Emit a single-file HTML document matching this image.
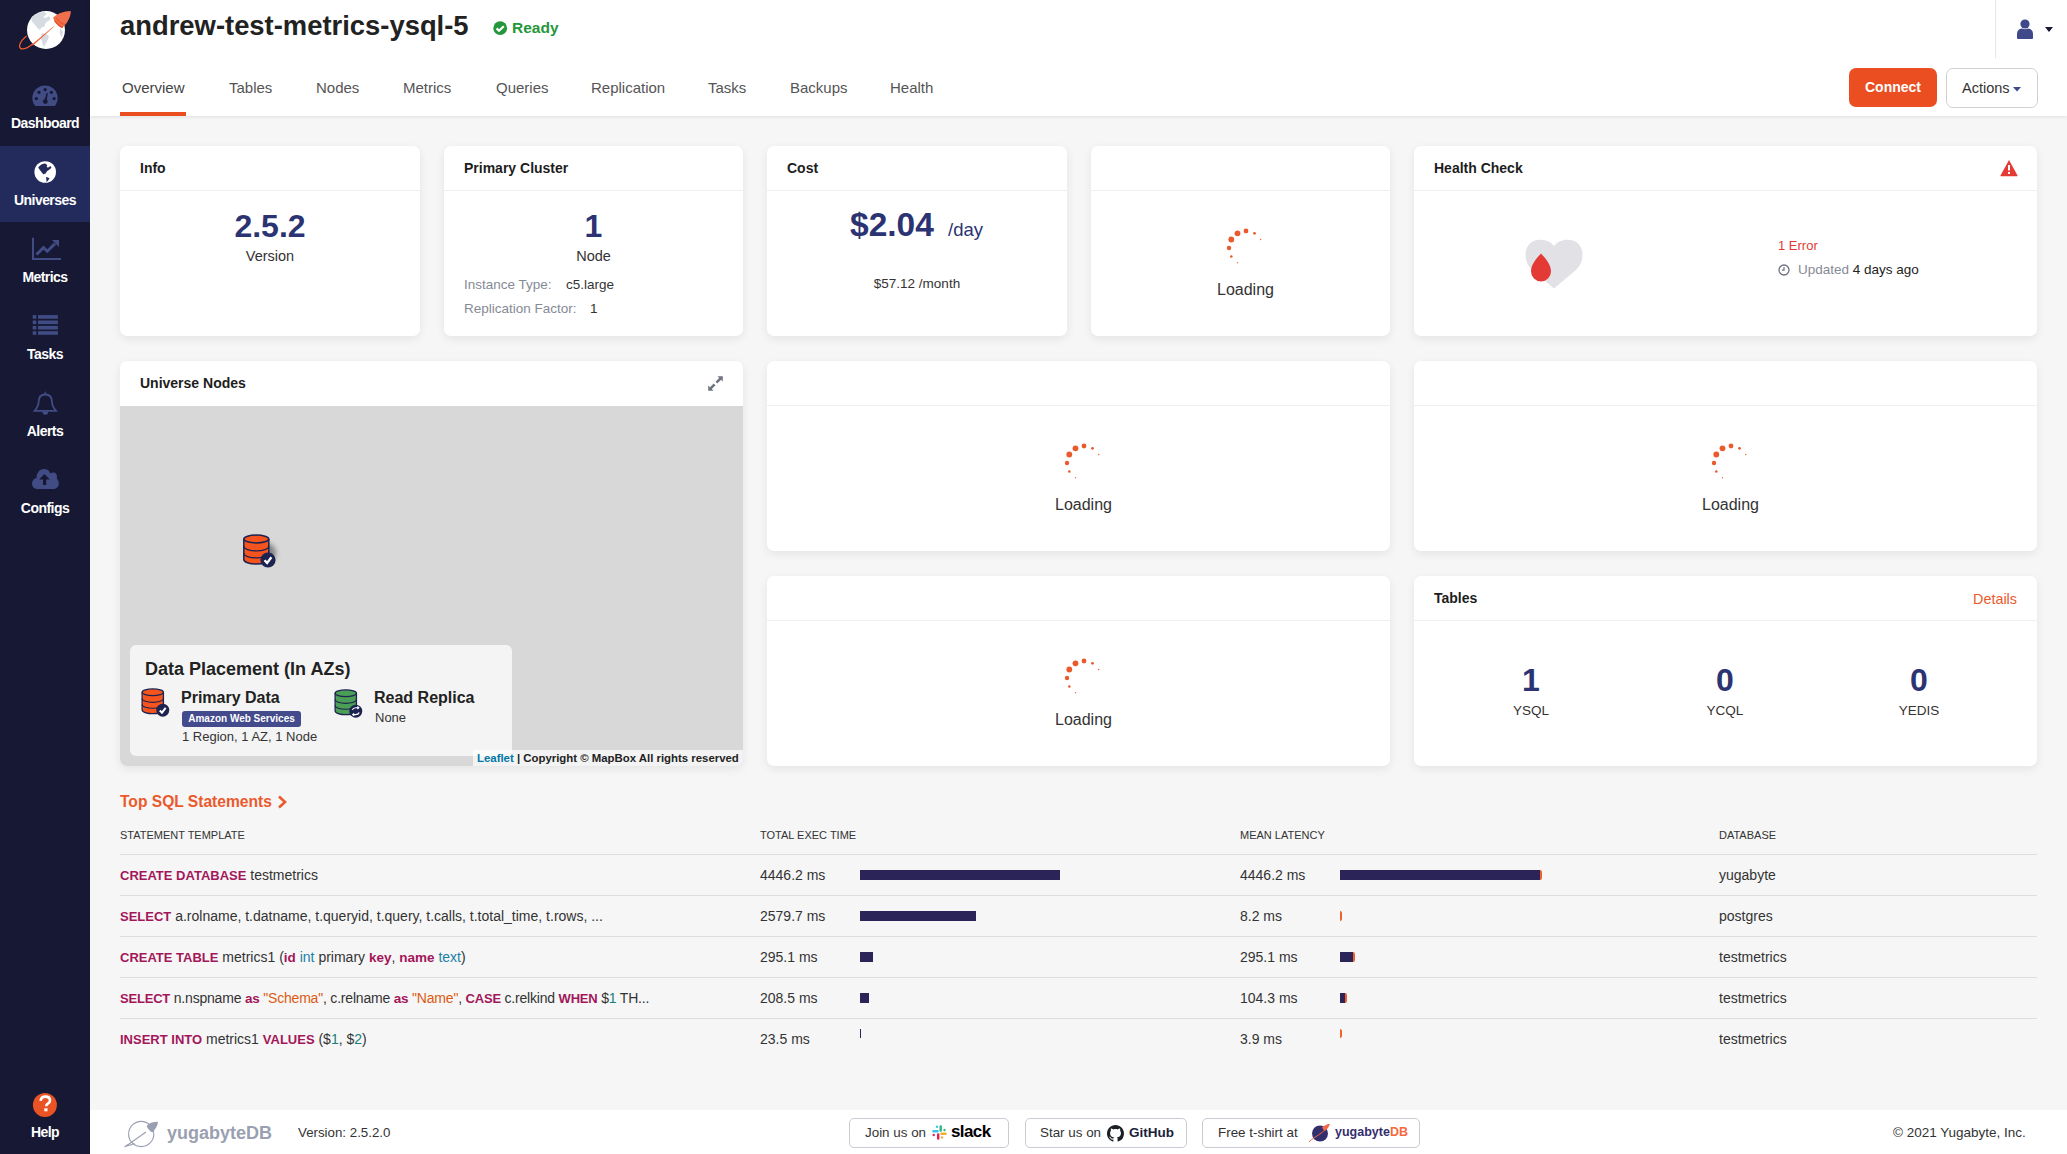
<!DOCTYPE html>
<html><head><meta charset="utf-8">
<style>
*{box-sizing:border-box;margin:0;padding:0}
html,body{width:2067px;height:1154px;overflow:hidden;background:#f6f6f6;font-family:"Liberation Sans",sans-serif;color:#333}
.a{position:absolute;white-space:nowrap}
#side{position:absolute;left:0;top:0;width:90px;height:1154px;background:#161834}
.nav{position:absolute;left:0;width:90px;height:76px;color:#fff;font-weight:bold;font-size:14px;letter-spacing:-0.55px}
.nav.active{background:#232b5c}
.nav .lbl{position:absolute;left:0;width:90px;text-align:center;line-height:16px}
.nav svg{position:absolute}
#hdr{position:absolute;left:90px;top:0;width:1977px;height:116px;background:#fff;box-shadow:0 1px 4px rgba(0,0,0,0.09)}
.title{font-size:27.4px;font-weight:bold;color:#222}
.tab{top:79px;font-size:15px;color:#555;line-height:18px}
.card{position:absolute;background:#fff;border-radius:7px;box-shadow:0 3px 10px rgba(0,0,0,0.075)}
.ch{position:absolute;left:0;top:0;right:0;height:45px;border-bottom:1px solid #efefef}
.ct{position:absolute;left:20px;top:14px;font-size:14px;font-weight:bold;color:#1d1d1d;line-height:17px}
.big{color:#2b3372;font-weight:bold}
.ctr{text-align:center}
.load{position:absolute;left:5px;width:100%;text-align:center;font-size:16px;color:#333;line-height:20px}
.sp{position:absolute;width:40px;height:40px}
.th{position:absolute;font-size:11px;color:#333;line-height:13px;top:829px}
.row{position:absolute;font-size:14px;color:#333;line-height:17px;white-space:nowrap}
.kw{color:#a3175a;font-weight:bold;font-size:13px}
.kl{color:#a3175a;font-weight:bold;font-size:13.5px}
.fn{color:#1a7fa8}
.str{color:#dc5a14}
.num{color:#13807a}
.hl{position:absolute;left:120px;width:1917px;height:1px;background:#dedede}
.bar{position:absolute;height:10px;background:#2b2458}
.tail{position:absolute;height:10px;width:2px;background:#f0622c;border-radius:0 2px 2px 0}
.fbtn{position:absolute;top:1118px;height:30px;border:1px solid #c9cbd2;border-radius:5px;background:#fff;font-size:13.4px;color:#333;line-height:28px}
</style></head>
<body>
<svg width="0" height="0" style="position:absolute">
 <defs>
  <symbol id="spin" viewBox="0 0 40 40">
   <g fill="#ea5a2c">
    <circle cx="20" cy="3" r="2.4"/>
    <circle cx="11.5" cy="5.3" r="2.9"/>
    <circle cx="5.3" cy="11.5" r="2.9"/>
    <circle cx="3" cy="20" r="2.2"/>
    <circle cx="5.3" cy="28.5" r="1.3"/>
    <circle cx="11.5" cy="34.7" r="0.6"/>
    <circle cx="28.5" cy="5.3" r="1.4"/>
    <circle cx="34.7" cy="11.5" r="0.7"/>
   </g>
  </symbol>
  <symbol id="db" viewBox="0 0 34 34">
   <path d="M1.3 5 v20.5 c0 2.6 5.6 4.6 12.5 4.6 s12.5 -2 12.5 -4.6 v-20.5" fill="#f6541f" stroke="#1c2350" stroke-width="1.5"/>
   <ellipse cx="13.8" cy="5" rx="12.5" ry="3.9" fill="#f6541f" stroke="#1c2350" stroke-width="1.5"/>
   <path d="M1.3 12.3 c0 2.6 5.6 4.5 12.5 4.5 s12.5 -1.9 12.5 -4.5 M1.3 19.3 c0 2.6 5.6 4.5 12.5 4.5 s12.5 -1.9 12.5 -4.5" fill="none" stroke="#1c2350" stroke-width="1.3"/>
   <circle cx="25.5" cy="26" r="7.6" fill="#1c2350"/>
   <path d="M22 26.3 l2.6 2.6 l4.3 -5.6" stroke="#fff" stroke-width="2.3" fill="none"/>
  </symbol>
  <symbol id="dbg" viewBox="0 0 34 34">
   <path d="M1.3 5 v20.5 c0 2.6 5.6 4.6 12.5 4.6 s12.5 -2 12.5 -4.6 v-20.5" fill="#4a9e55" stroke="#1c2350" stroke-width="1.5"/>
   <ellipse cx="13.8" cy="5" rx="12.5" ry="3.9" fill="#4a9e55" stroke="#1c2350" stroke-width="1.5"/>
   <path d="M1.3 12.3 c0 2.6 5.6 4.5 12.5 4.5 s12.5 -1.9 12.5 -4.5 M1.3 19.3 c0 2.6 5.6 4.5 12.5 4.5 s12.5 -1.9 12.5 -4.5" fill="none" stroke="#1c2350" stroke-width="1.3"/>
   <circle cx="25.5" cy="26" r="7.6" fill="#1c2350"/>
   <path d="M21.5 24.5 q1 -2.5 4 -2.5 h3 M27.5 20.5 l1.5 1.5 l-1.5 1.5 M29.5 27.5 q-1 2.5 -4 2.5 h-3 M23.5 28.5 l-1.5 1.5 l1.5 1.5" stroke="#fff" stroke-width="1.4" fill="none"/>
  </symbol>
 </defs>
</svg>
<div id="side">
  <div class="nav active" style="top:146px"></div>
  <svg class="a" style="left:0;top:0" width="90" height="1154" viewBox="0 0 90 1154">
    <!-- logo -->
    <circle cx="46" cy="30" r="19" fill="#fff"/>
    <path d="M33 16 q5 -4 11 -4 q3 1 2 3 q-3 1 -2 3 q3 0 5 -2 q2 2 1 4 q-3 1 -4 3 q-2 1 -1 3 q-4 1 -5 4 q-3 -2 -5 -5 q-3 -3 -4 -6 q0 -2 2 -3z M42 33 q5 1 7 3 q-1 4 -3 7 q-1 2 -2 4 q-2 -3 -2 -6 q-2 -3 0 -8z M60 28 q3 2 3 5 q-1 3 -2 4 q-2 -4 -1 -9z" fill="#d5dbe0"/>
    <path d="M26.6 35.9 C 21 40, 18 46, 20.5 48.4 C 23 50, 28.5 47.2, 32.4 44.2" stroke="#ef5b2e" stroke-width="1.3" fill="none"/><path d="M31.5 44.8 L 53.7 26.2 L 53.9 26.8 L 33 45.6 Z" fill="#ef5b2e"/>
    <path d="M53 18 C 56 14, 64 11, 70.8 11 C 70.8 17, 67 24, 62 28 Q 57 26 53 18Z" fill="#f0704e"/>
    <path d="M54.5 20.5 Q 59 26.5 63 27.3 M56.5 18 Q 60 23.5 65 24.5" stroke="#e8532b" stroke-width="1.3" fill="none"/>
    <!-- dashboard gauge -->
    <g transform="translate(32,85)">
      <path d="M3.2 21 A 12.6 12.6 0 1 1 22.8 21 Z" fill="#414c85"/>
      <g fill="#161834"><circle cx="13.1" cy="4.6" r="1.6"/><circle cx="7" cy="7.3" r="1.6"/><circle cx="19.4" cy="7.3" r="1.6"/><circle cx="4.3" cy="13.6" r="1.6"/><circle cx="22.1" cy="13.6" r="1.6"/><circle cx="13.3" cy="16.6" r="2.4"/></g>
      <path d="M14.6 8 L 15.9 8.3 L 14.4 16.6 L 12.2 16.6 Z" fill="#161834"/>
    </g>
    <!-- universes globe -->
    <circle cx="45.2" cy="172" r="10.8" fill="#fff"/>
    <path d="M38.2 167.5 q3 -4 7 -4 q2 1 2 2 q-1 1 0 2 q2 0 3 -1.5 q1.5 1 1 2 q-2 2 -4 3 q-1 1 -1.5 2.5 q-1.5 0 -2 1 q-1.5 -1.5 -3 -3.5 q-1.5 -1.8 -2.5 -3.5z M46 177 q2.5 0 3.5 1.5 q-1.5 2.5 -3 3.5 q0 -2 -0.5 -5z" fill="#232b5c"/>
    <!-- metrics -->
    <path d="M33 237.7 V259 H61" stroke="#414c85" stroke-width="2" fill="none"/>
    <path d="M36.5 254.5 L43.5 247.6 L47.3 251.2 L55 243.6" stroke="#414c85" stroke-width="2.9" fill="none"/>
    <path d="M52 240 H59 V247 Z" fill="#414c85"/>
    <!-- tasks -->
    <g fill="#414c85">
      <rect x="32.7" y="315.1" width="3.6" height="3.6"/><rect x="38" y="315.1" width="19.9" height="3.6"/>
      <rect x="32.7" y="320.5" width="3.6" height="3.6"/><rect x="38" y="320.5" width="19.9" height="3.6"/>
      <rect x="32.7" y="325.9" width="3.6" height="3.6"/><rect x="38" y="325.9" width="19.9" height="3.6"/>
      <rect x="32.7" y="331.2" width="3.6" height="3.6"/><rect x="38" y="331.2" width="19.9" height="3.6"/>
    </g>
    <!-- alerts bell -->
    <path d="M45.3 394.5 C 40 394.5, 38.6 398, 38.6 402 C 38.6 406, 36.5 408.5, 34.6 410.8 H 56 C 54 408.5, 52 406, 52 402 C 52 398, 50.6 394.5, 45.3 394.5 Z" stroke="#414c85" stroke-width="1.8" fill="none"/>
    <path d="M44 394.6 L45.3 391 L46.6 394.6Z" fill="#414c85"/>
    <path d="M42.4 411.5 A 2.9 3.2 0 0 0 48.2 411.5 Z" fill="#414c85"/>
    <!-- configs cloud -->
    <path d="M37.5 489 C 34 489, 32 486.5, 32 483.5 C 32 480.5, 34 478.5, 36.5 478 C 36.5 473, 39.5 469.1, 44 469.1 C 47.5 469.1, 49.5 471, 50.5 473.5 C 51.5 472.5, 52.5 472.5, 53.5 472.5 C 55.5 472.5, 57 474.5, 57 476.5 C 57 477, 57 477.5, 56.8 478.5 C 58 479.5, 58.8 481.5, 58.8 483.5 C 58.8 486.5, 56.5 489, 53.5 489 Z" fill="#414c85"/>
    <path d="M44.4 474 L39.1 479.6 H43 V485 H46.2 V479.6 H49.9 Z" fill="#161834"/>
    <!-- help -->
    <circle cx="44.9" cy="1104.9" r="12" fill="#ea5424"/>
    <path d="M40.6 1100.8 C 41 1097.8, 43 1096.6, 45.4 1096.6 C 48.2 1096.6, 50 1098.2, 50 1100.4 C 50 1102.6, 48.6 1103.4, 47.3 1104.2 C 46.5 1104.7, 46.3 1105.2, 46.3 1106.2" stroke="#fff" stroke-width="2.6" fill="none"/>
    <rect x="44.3" y="1108.3" width="3.2" height="3" fill="#fff"/>
  </svg>
  <div class="nav" style="top:70px"><div class="lbl" style="top:45px">Dashboard</div></div>
  <div class="nav" style="top:146px"><div class="lbl" style="top:46px">Universes</div></div>
  <div class="nav" style="top:223px"><div class="lbl" style="top:46px">Metrics</div></div>
  <div class="nav" style="top:300px"><div class="lbl" style="top:46px">Tasks</div></div>
  <div class="nav" style="top:377px"><div class="lbl" style="top:46px">Alerts</div></div>
  <div class="nav" style="top:454px"><div class="lbl" style="top:46px">Configs</div></div>
  <div class="nav" style="top:1079px"><div class="lbl" style="top:45px">Help</div></div>
</div>

<div id="hdr"></div>
<div class="a title" style="left:120px;top:10px">andrew-test-metrics-ysql-5</div>
<svg class="a" style="left:493px;top:21px" width="15" height="15" viewBox="0 0 15 15"><circle cx="7.2" cy="7.2" r="6.9" fill="#25963b"/><path d="M3.6 7.4 l2.4 2.4 l4.8 -4.6" stroke="#fff" stroke-width="2.2" fill="none"/></svg>
<div class="a" style="left:512px;top:18px;font-size:15.5px;line-height:20px;font-weight:bold;color:#25963b">Ready</div>

<div class="a tab" style="left:122px;color:#444">Overview</div>
<div class="a" style="left:120px;top:112px;width:66px;height:4px;background:#ea4e1f"></div>
<div class="a tab" style="left:229px">Tables</div>
<div class="a tab" style="left:316px">Nodes</div>
<div class="a tab" style="left:403px">Metrics</div>
<div class="a tab" style="left:496px">Queries</div>
<div class="a tab" style="left:591px">Replication</div>
<div class="a tab" style="left:708px">Tasks</div>
<div class="a tab" style="left:790px">Backups</div>
<div class="a tab" style="left:890px">Health</div>

<div class="a" style="left:1995px;top:0;width:1px;height:58px;background:#e6e6e6"></div>
<svg class="a" style="left:2016px;top:19px" width="18" height="20" viewBox="0 0 18 20"><circle cx="9" cy="5" r="4.6" fill="#3f4889"/><path d="M1 19 v-4 q0 -5 5 -5.5 q3 1.5 6 0 q5 0.5 5 5.5 v4 q0 1 -1 1 h-14 q-1 0 -1 -1z" fill="#3f4889"/></svg>
<svg class="a" style="left:2045px;top:27px" width="9" height="6" viewBox="0 0 9 6"><path d="M0 0 h8 l-4 5z" fill="#161834"/></svg>

<div class="a" style="left:1849px;top:68px;width:88px;height:39px;background:#ea4e21;border-radius:7px;color:#fff;font-weight:bold;font-size:14px;text-align:center;line-height:39px">Connect</div>
<div class="a" style="left:1946px;top:68px;width:92px;height:40px;background:#fff;border:1px solid #d0d0d0;border-radius:7px;color:#333;font-size:14.5px;line-height:38px;padding-left:15px">Actions <svg width="8" height="5" viewBox="0 0 8 5" style="vertical-align:middle;margin-left:-1px"><path d="M0 0 h8 l-4 4.5z" fill="#3f4889"/></svg></div>
<!-- ROW 1 -->
<div class="card" style="left:120px;top:146px;width:300px;height:190px">
  <div class="ch"></div><div class="ct">Info</div>
  <div class="a big ctr" style="left:0;width:300px;top:61px;font-size:32px;line-height:38px">2.5.2</div>
  <div class="a ctr" style="left:0;width:300px;top:101px;font-size:14.5px;line-height:18px;color:#333">Version</div>
</div>
<div class="card" style="left:444px;top:146px;width:299px;height:190px">
  <div class="ch"></div><div class="ct">Primary Cluster</div>
  <div class="a big ctr" style="left:0;width:299px;top:61px;font-size:32px;line-height:38px">1</div>
  <div class="a ctr" style="left:0;width:299px;top:101px;font-size:14.5px;line-height:18px;color:#333">Node</div>
  <div class="a" style="left:20px;top:131px;font-size:13.5px;line-height:16px;color:#868a96">Instance Type:</div>
  <div class="a" style="left:122px;top:131px;font-size:13.5px;line-height:16px;color:#333">c5.large</div>
  <div class="a" style="left:20px;top:155px;font-size:13.5px;line-height:16px;color:#868a96">Replication Factor:</div>
  <div class="a" style="left:146px;top:155px;font-size:13.5px;line-height:16px;color:#333">1</div>
</div>
<div class="card" style="left:767px;top:146px;width:300px;height:190px">
  <div class="ch"></div><div class="ct">Cost</div>
  <div class="a big" style="left:83px;top:60px;font-size:33.5px;line-height:38px">$2.04</div>
  <div class="a" style="left:181px;top:73px;font-size:18.5px;line-height:22px;color:#2b3372">/day</div>
  <div class="a ctr" style="left:0;width:300px;top:130px;font-size:13.5px;line-height:16px;color:#333">$57.12 /month</div>
</div>
<div class="card" style="left:1091px;top:146px;width:299px;height:190px">
  <div class="ch"></div>
  <svg class="sp" style="left:134.8px;top:82px" viewBox="0 0 40 40"><use href="#spin"/></svg>
  <div class="load" style="top:134px">Loading</div>
</div>
<div class="card" style="left:1414px;top:146px;width:623px;height:190px">
  <div class="ch"></div><div class="ct">Health Check</div>
  <svg class="a" style="left:586px;top:13px" width="18" height="18" viewBox="0 0 18 18"><path d="M9 1 L17.5 16.5 Q17.8 17.2 17 17.2 H1 Q0.2 17.2 0.5 16.5 Z" fill="#e33a32"/><rect x="8" y="6" width="2" height="5.5" fill="#fff"/><rect x="8" y="13" width="2" height="2" fill="#fff"/></svg>
  <svg class="a" style="left:111px;top:93px" width="58" height="50" viewBox="0 0 58 50">
    <path d="M29 7 C 24 0, 12 -1.5, 5.5 4 C -1.5 10, -1 22, 6 30 L 29 49.5 L 52 30 C 59 22, 59.5 10, 52.5 4 C 46 -1.5, 34 0, 29 7 Z" fill="#e1e1e6"/>
    <path d="M16 14.5 C 12 19, 6 25, 6 32.5 A 10 10 0 0 0 26 32.5 C 26 25, 20 19, 16 14.5 Z" fill="#e33a36"/>
  </svg>
  <div class="a" style="left:364px;top:92px;font-size:13px;line-height:16px;color:#e33a36">1 Error</div>
  <svg class="a" style="left:364px;top:118px" width="12" height="12" viewBox="0 0 12 12"><circle cx="6" cy="6" r="5" stroke="#6e7280" stroke-width="1.3" fill="none"/><path d="M6 3 v3.2 h-2" stroke="#6e7280" stroke-width="1.2" fill="none"/></svg>
  <div class="a" style="left:384px;top:116px;font-size:13.5px;line-height:16px;color:#868a96">Updated <span style="color:#222">4 days ago</span></div>
</div>

<!-- ROW 2 -->
<div class="card" style="left:120px;top:361px;width:623px;height:405px;overflow:hidden">
  <div class="ct">Universe Nodes</div>
  <svg class="a" style="left:588px;top:15px" width="15" height="15" viewBox="0 0 15 15"><path d="M9.5 0.2 H14.8 V5.5 L13 3.8 L9.3 7.5 L7.5 5.7 L11.2 2 Z M5.5 14.8 H0.2 V9.5 L2 11.2 L5.7 7.5 L7.5 9.3 L3.8 13 Z" fill="#70747f"/></svg>
  <div class="a" style="left:0;top:45px;width:623px;height:360px;background:#d8d8d8"></div>
  <svg class="a" style="left:118px;top:168px" width="44" height="44" viewBox="0 0 44 44">
    <defs><filter id="sh" x="-50%" y="-50%" width="200%" height="200%"><feGaussianBlur stdDeviation="2.5"/></filter></defs>
    <ellipse cx="28" cy="24" rx="10" ry="10" fill="rgba(0,0,0,0.4)" filter="url(#sh)"/>
    <use href="#db" x="4.5" y="5" width="34" height="34"/>
  </svg>
  <div class="a" style="left:10px;top:284px;width:382px;height:111px;background:#f4f4f4;border-radius:6px"></div>
  <div class="a" style="left:25px;top:297px;font-size:18px;line-height:22px;font-weight:bold;color:#222">Data Placement (In AZs)</div>
  <svg class="a" style="left:20.5px;top:327.4px" width="29" height="29" viewBox="0 0 34 34"><use href="#db"/></svg>
  <div class="a" style="left:61px;top:327px;font-size:16px;line-height:19px;font-weight:bold;color:#222">Primary Data</div>
  <div class="a" style="left:62px;top:350px;width:119px;height:16px;background:#434b8c;border-radius:3px;color:#fff;font-size:10px;font-weight:bold;line-height:16px;text-align:center">Amazon Web Services</div>
  <div class="a" style="left:62px;top:368px;font-size:13px;line-height:16px;color:#333">1 Region, 1 AZ, 1 Node</div>
  <svg class="a" style="left:213.5px;top:327.5px" width="29" height="29" viewBox="0 0 34 34"><use href="#dbg"/></svg>
  <div class="a" style="left:254px;top:327px;font-size:16px;line-height:19px;font-weight:bold;color:#222">Read Replica</div>
  <div class="a" style="left:255px;top:349px;font-size:13px;line-height:16px;color:#333">None</div>
  <div class="a" style="left:353px;top:389px;width:270px;height:16px;background:rgba(255,255,255,0.7)"></div>
  <div class="a" style="left:357px;top:390px;font-size:11.4px;line-height:14px;font-weight:bold;color:#222"><span style="color:#0078a8">Leaflet</span> | Copyright © MapBox All rights reserved</div>
</div>
<div class="card" style="left:767px;top:361px;width:623px;height:190px">
  <div class="ch"></div>
  <svg class="sp" style="left:296.5px;top:82px" viewBox="0 0 40 40"><use href="#spin"/></svg>
  <div class="load" style="top:134px">Loading</div>
</div>
<div class="card" style="left:1414px;top:361px;width:623px;height:190px">
  <div class="ch"></div>
  <svg class="sp" style="left:296.5px;top:82px" viewBox="0 0 40 40"><use href="#spin"/></svg>
  <div class="load" style="top:134px">Loading</div>
</div>
<div class="card" style="left:767px;top:576px;width:623px;height:190px">
  <div class="ch"></div>
  <svg class="sp" style="left:296.5px;top:82px" viewBox="0 0 40 40"><use href="#spin"/></svg>
  <div class="load" style="top:134px">Loading</div>
</div>
<div class="card" style="left:1414px;top:576px;width:623px;height:190px">
  <div class="ch"></div><div class="ct">Tables</div>
  <div class="a" style="left:559px;top:15px;font-size:14.4px;line-height:17px;color:#ea5a2c">Details</div>
  <div class="a big ctr" style="left:20px;width:194px;top:85px;font-size:32px;line-height:38px">1</div>
  <div class="a ctr" style="left:20px;width:194px;top:127px;font-size:13.5px;line-height:16px;color:#333">YSQL</div>
  <div class="a big ctr" style="left:214px;width:194px;top:85px;font-size:32px;line-height:38px">0</div>
  <div class="a ctr" style="left:214px;width:194px;top:127px;font-size:13.5px;line-height:16px;color:#333">YCQL</div>
  <div class="a big ctr" style="left:408px;width:194px;top:85px;font-size:32px;line-height:38px">0</div>
  <div class="a ctr" style="left:408px;width:194px;top:127px;font-size:13.5px;line-height:16px;color:#333">YEDIS</div>
</div>
<!-- TOP SQL -->
<div class="a" style="left:120px;top:792px;font-size:15.6px;line-height:20px;color:#ea5a2c;font-weight:bold">Top SQL Statements</div>
<svg class="a" style="left:277px;top:795px" width="10" height="14" viewBox="0 0 10 14"><path d="M2 1.5 L8 7 L2 12.5" stroke="#ea5a2c" stroke-width="2.6" fill="none"/></svg>

<div class="th" style="left:120px">STATEMENT TEMPLATE</div>
<div class="th" style="left:760px">TOTAL EXEC TIME</div>
<div class="th" style="left:1240px">MEAN LATENCY</div>
<div class="th" style="left:1719px">DATABASE</div>

<div class="hl" style="top:854px"></div>
<div class="hl" style="top:895px"></div>
<div class="hl" style="top:936px"></div>
<div class="hl" style="top:977px"></div>
<div class="hl" style="top:1018px"></div>

<div class="row" style="left:120px;top:867px"><span class="kw">CREATE DATABASE</span> testmetrics</div>
<div class="row" style="left:120px;top:908px"><span class="kw">SELECT</span> a.rolname, t.datname, t.queryid, t.query, t.calls, t.total_time, t.rows, ...</div>
<div class="row" style="left:120px;top:949px"><span class="kw">CREATE TABLE</span> metrics1 (<span class="kl">id</span> <span class="fn">int</span> primary <span class="kl">key</span>, <span class="kl">name</span> <span class="fn">text</span>)</div>
<div class="row" style="left:120px;top:990px;letter-spacing:-0.2px"><span class="kw">SELECT</span> n.nspname <span class="kl">as</span> <span class="str">"Schema"</span>, c.relname <span class="kl">as</span> <span class="str">"Name"</span>, <span class="kw">CASE</span> c.relkind <span class="kw">WHEN</span> $<span class="num">1</span> TH...</div>
<div class="row" style="left:120px;top:1031px"><span class="kw">INSERT INTO</span> metrics1 <span class="kw">VALUES</span> ($<span class="num">1</span>, $<span class="num">2</span>)</div>

<div class="row" style="left:760px;top:867px">4446.2 ms</div>
<div class="row" style="left:760px;top:908px">2579.7 ms</div>
<div class="row" style="left:760px;top:949px">295.1 ms</div>
<div class="row" style="left:760px;top:990px">208.5 ms</div>
<div class="row" style="left:760px;top:1031px">23.5 ms</div>

<div class="bar" style="left:860px;top:870px;width:200px"></div>
<div class="bar" style="left:860px;top:911px;width:116px"></div>
<div class="bar" style="left:860px;top:952px;width:13px"></div>
<div class="bar" style="left:860px;top:993px;width:9px"></div>
<div class="bar" style="left:860px;top:1029px;width:1px;height:9px"></div>

<div class="row" style="left:1240px;top:867px">4446.2 ms</div>
<div class="row" style="left:1240px;top:908px">8.2 ms</div>
<div class="row" style="left:1240px;top:949px">295.1 ms</div>
<div class="row" style="left:1240px;top:990px">104.3 ms</div>
<div class="row" style="left:1240px;top:1031px">3.9 ms</div>

<div class="bar" style="left:1340px;top:870px;width:200px"></div><div class="tail" style="left:1540px;top:870px"></div>
<div class="tail" style="left:1340px;top:911px"></div>
<div class="bar" style="left:1340px;top:952px;width:13px"></div><div class="tail" style="left:1353px;top:952px"></div>
<div class="bar" style="left:1340px;top:993px;width:5px"></div><div class="tail" style="left:1345px;top:993px"></div>
<div class="tail" style="left:1340px;top:1029px;height:9px"></div>

<div class="row" style="left:1719px;top:867px">yugabyte</div>
<div class="row" style="left:1719px;top:908px">postgres</div>
<div class="row" style="left:1719px;top:949px">testmetrics</div>
<div class="row" style="left:1719px;top:990px">testmetrics</div>
<div class="row" style="left:1719px;top:1031px">testmetrics</div>

<!-- FOOTER -->
<div class="a" style="left:90px;top:1110px;width:1977px;height:44px;background:#fff"></div>
<svg class="a" style="left:110px;top:1110px" width="60" height="44" viewBox="110 1110 60 44">
  <circle cx="141.2" cy="1134" r="12.6" stroke="#9a9fb1" stroke-width="1.1" fill="none"/>
  <path d="M146 1132 L 129 1144 C 123 1148, 124 1146.5, 128.5 1145.5 C 131 1145, 133 1144, 134.5 1143.5" stroke="#9a9fb1" stroke-width="1.1" fill="none"/>
  <path d="M146.7 1125.7 Q 150 1122 158 1121.8 Q 157.5 1127.5 152.3 1132.4 Q 148 1130 146.7 1125.7Z" fill="#9a9fb1"/>
</svg>
<div class="a" style="left:167px;top:1122px;font-size:18px;line-height:22px;font-weight:bold;color:#9a9fb1">yugabyteDB</div>
<div class="a" style="left:298px;top:1125px;font-size:13.3px;line-height:16px;color:#333">Version: 2.5.2.0</div>

<div class="fbtn" style="left:849px;width:160px;padding-left:15px">Join us on
  <svg style="position:absolute;left:82px;top:6px" width="15" height="15" viewBox="0 0 15 15">
   <rect x="0.3" y="5" width="6.4" height="2.4" rx="1.2" fill="#36c5f0"/><rect x="3.8" y="0.5" width="2.4" height="2.4" rx="1.2" fill="#36c5f0"/>
   <rect x="7.5" y="0.3" width="2.4" height="6.4" rx="1.2" fill="#2eb67d"/><rect x="11.3" y="3.8" width="2.4" height="2.4" rx="1.2" fill="#2eb67d"/>
   <rect x="8.3" y="7.6" width="6.4" height="2.4" rx="1.2" fill="#ecb22e"/><rect x="8.8" y="11.3" width="2.4" height="2.4" rx="1.2" fill="#ecb22e"/>
   <rect x="5" y="8.3" width="2.4" height="6.4" rx="1.2" fill="#e01e5a"/><rect x="0.5" y="8.8" width="2.4" height="2.4" rx="1.2" fill="#e01e5a"/>
  </svg>
  <span style="position:absolute;left:101px;top:-1px;font-size:17px;font-weight:bold;color:#000;letter-spacing:-0.6px">slack</span>
</div>
<div class="fbtn" style="left:1025px;width:162px;padding-left:14px">Star us on
  <svg style="position:absolute;left:81px;top:6px" width="17" height="17" viewBox="0 0 16 16"><path fill="#1b1f23" d="M8 0C3.58 0 0 3.58 0 8c0 3.54 2.29 6.53 5.47 7.59.4.07.55-.17.55-.38 0-.19-.01-.82-.01-1.49-2.01.37-2.53-.49-2.69-.94-.09-.23-.48-.94-.82-1.13-.28-.15-.68-.52-.01-.53.63-.01 1.08.58 1.23.82.72 1.21 1.87.87 2.33.66.07-.52.28-.87.51-1.07-1.78-.2-3.640-.89-3.64-3.95 0-.87.31-1.59.82-2.15-.08-.2-.36-1.02.08-2.12 0 0 .67-.21 2.2.82.64-.18 1.32-.27 2-.27.68 0 1.36.09 2 .27 1.53-1.04 2.2-.82 2.2-.82.44 1.1.16 1.92.08 2.12.51.56.82 1.27.82 2.15 0 3.07-1.87 3.75-3.65 3.95.29.25.54.73.54 1.48 0 1.07-.01 1.93-.01 2.2 0 .21.15.46.55.38A8.013 8.013 0 0016 8c0-4.42-3.58-8-8-8z"/></svg>
  <span style="position:absolute;left:103px;top:0px;font-size:13.5px;font-weight:bold;color:#1b1f3b">GitHub</span>
</div>
<div class="fbtn" style="left:1202px;width:218px;padding-left:15px">Free t-shirt at
  <svg style="position:absolute;left:105px;top:4px" width="24" height="20" viewBox="0 0 24 20">
   <circle cx="12" cy="10.5" r="8" fill="#332e6c"/>
   <path d="M1 19 C 3 16, 12 12, 18 6" stroke="#f06a4a" stroke-width="1" fill="none"/>
   <path d="M14 4 L20 1 L22 1 L20 5 L17 8 Q15 7 14 4Z" fill="#f06a4a"/>
  </svg>
  <span style="position:absolute;left:132px;top:-1px;font-size:12.5px;font-weight:bold;color:#332e6c">yugabyte<span style="color:#f6693f">DB</span></span>
</div>
<div class="a" style="left:1893px;top:1125px;font-size:13.5px;line-height:16px;color:#333">© 2021 Yugabyte, Inc.</div>
</body></html>
